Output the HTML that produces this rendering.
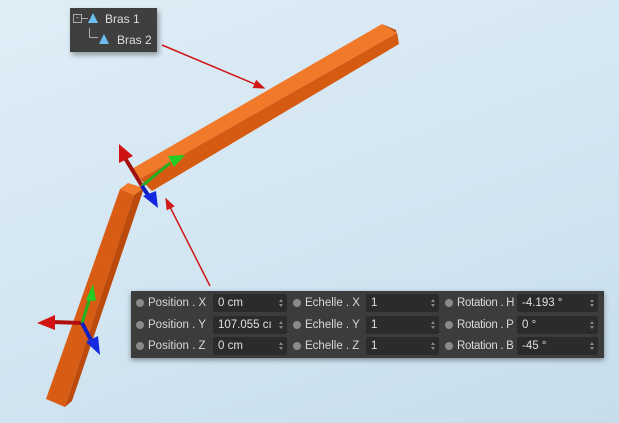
<!DOCTYPE html>
<html><head><meta charset="utf-8"><style>
html,body{margin:0;padding:0;width:619px;height:423px;overflow:hidden;font-family:"Liberation Sans",sans-serif}
body{background:linear-gradient(160deg,#dfedf6 0%,#d3e6f2 50%,#c7ddec 100%);position:relative}
svg{position:absolute;left:0;top:0}
.tree{position:absolute;left:70px;top:8px;width:87px;height:44px;background:#3f3f3f;box-shadow:2px 3px 5px rgba(0,0,0,.35);color:#ddd;font-size:12px}
.panel{position:absolute;left:131px;top:291px;width:473px;height:67px;background:#3c3c3c;box-shadow:0 2px 5px rgba(0,0,0,.4);color:#d8d8d8;font-size:11.5px}
.r{position:absolute;height:18px;line-height:18px}
.dot{position:absolute;width:8px;height:8px;border-radius:50%;background:#8a8a8a;top:5px}
.in{position:absolute;height:18px;background:#2b2b2b;border-radius:2px;padding-left:5px;box-sizing:border-box;color:#e0e0e0;overflow:hidden;white-space:nowrap}
.in:after{content:"";position:absolute;right:4px;top:5px;width:0;height:0;border-left:2.5px solid transparent;border-right:2.5px solid transparent;border-bottom:3px solid #888;}
.in:before{content:"";position:absolute;right:4px;top:10px;width:0;height:0;border-left:2.5px solid transparent;border-right:2.5px solid transparent;border-top:3px solid #888;}
.rot{letter-spacing:-0.3px}
</style></head><body>
<svg width="619" height="423" viewBox="0 0 619 423">
<defs><marker id="ah" markerWidth="8" markerHeight="8" refX="7" refY="4" orient="auto"><path d="M0,1 L8,4 L0,7 Z" fill="#d01818"/></marker></defs>
<polygon points="130,170 382,24 397,33 140,179" fill="#f07a2a"/>
<polygon points="140,179 397,33 399,44 152,191" fill="#d55a12"/>
<polygon points="382,24 397,33 399,44 396,30" fill="#c04a0c"/>
<polygon points="120,189 128,183 144,188 134,195" fill="#f07a2a"/>
<polygon points="120,189 134,195 65,407 46,399" fill="#d85c14"/>
<polygon points="134,195 144,188 72,401 65,407" fill="#bc4a0c"/>
<line x1="142" y1="186" x2="125" y2="158" stroke="#a01010" stroke-width="4"/>
<polygon points="119,144 133,156 119,163" fill="#d01212"/>
<line x1="142" y1="186" x2="170" y2="163" stroke="#20b020" stroke-width="3"/>
<polygon points="185,155 168,156 174,167" fill="#22cc22"/>
<line x1="142" y1="186" x2="150" y2="198" stroke="#1020c0" stroke-width="4"/>
<polygon points="143,196 156,191 158,208" fill="#1428e0"/>
<line x1="82" y1="323" x2="52" y2="322" stroke="#b01010" stroke-width="4"/>
<polygon points="37,323 55,315 55,330" fill="#d01212"/>
<line x1="82" y1="323" x2="90" y2="298" stroke="#20b020" stroke-width="3"/>
<polygon points="93,284 86,300 96,301" fill="#22cc22"/>
<line x1="82" y1="323" x2="92" y2="342" stroke="#1020c0" stroke-width="4"/>
<polygon points="100,355 86,342 98,336" fill="#1428e0"/>
<line x1="162" y1="45" x2="264" y2="88" stroke="#d01818" stroke-width="1.5" marker-end="url(#ah)"/>
<line x1="210" y1="286" x2="166" y2="199" stroke="#d01818" stroke-width="1.5" marker-end="url(#ah)"/>
</svg>
<div class="tree">
<div style="position:absolute;left:3px;top:6px;width:7px;height:7px;border:1px solid #aaa;font-size:8px;line-height:6px;text-align:center">-</div>
<div style="position:absolute;left:12px;top:10px;width:6px;border-top:1px solid #aaa"></div>
<div style="position:absolute;left:18px;top:5px;width:0;height:0;border-left:5px solid transparent;border-right:5px solid transparent;border-bottom:10px solid #6cc0f0"></div>
<div style="position:absolute;left:35px;top:4px">Bras 1</div>
<div style="position:absolute;left:19px;top:20px;width:8px;height:9px;border-left:1px solid #aaa;border-bottom:1px solid #aaa"></div>
<div style="position:absolute;left:29px;top:26px;width:0;height:0;border-left:5px solid transparent;border-right:5px solid transparent;border-bottom:10px solid #6cc0f0"></div>
<div style="position:absolute;left:47px;top:25px">Bras 2</div>
</div>
<div class="panel">
<div class="r" style="top:3px;left:0;width:473px">
<div class="dot" style="left:5px"></div><span style="position:absolute;left:17px">Position . X</span><div class="in" style="left:82px;width:74px">0 cm</div>
<div class="dot" style="left:162px"></div><span style="position:absolute;left:174px">Echelle . X</span><div class="in" style="left:235px;width:73px">1</div>
<div class="dot" style="left:314px"></div><span class="rot" style="position:absolute;left:326px">Rotation . H</span><div class="in" style="left:386px;width:81px">-4.193 °</div>
</div>
<div class="r" style="top:25px;left:0;width:473px">
<div class="dot" style="left:5px"></div><span style="position:absolute;left:17px">Position . Y</span><div class="in" style="left:82px;width:74px">107.055 cı</div>
<div class="dot" style="left:162px"></div><span style="position:absolute;left:174px">Echelle . Y</span><div class="in" style="left:235px;width:73px">1</div>
<div class="dot" style="left:314px"></div><span class="rot" style="position:absolute;left:326px">Rotation . P</span><div class="in" style="left:386px;width:81px">0 °</div>
</div>
<div class="r" style="top:46px;left:0;width:473px">
<div class="dot" style="left:5px"></div><span style="position:absolute;left:17px">Position . Z</span><div class="in" style="left:82px;width:74px">0 cm</div>
<div class="dot" style="left:162px"></div><span style="position:absolute;left:174px">Echelle . Z</span><div class="in" style="left:235px;width:73px">1</div>
<div class="dot" style="left:314px"></div><span class="rot" style="position:absolute;left:326px">Rotation . B</span><div class="in" style="left:386px;width:81px">-45 °</div>
</div>
</div>
</body></html>
